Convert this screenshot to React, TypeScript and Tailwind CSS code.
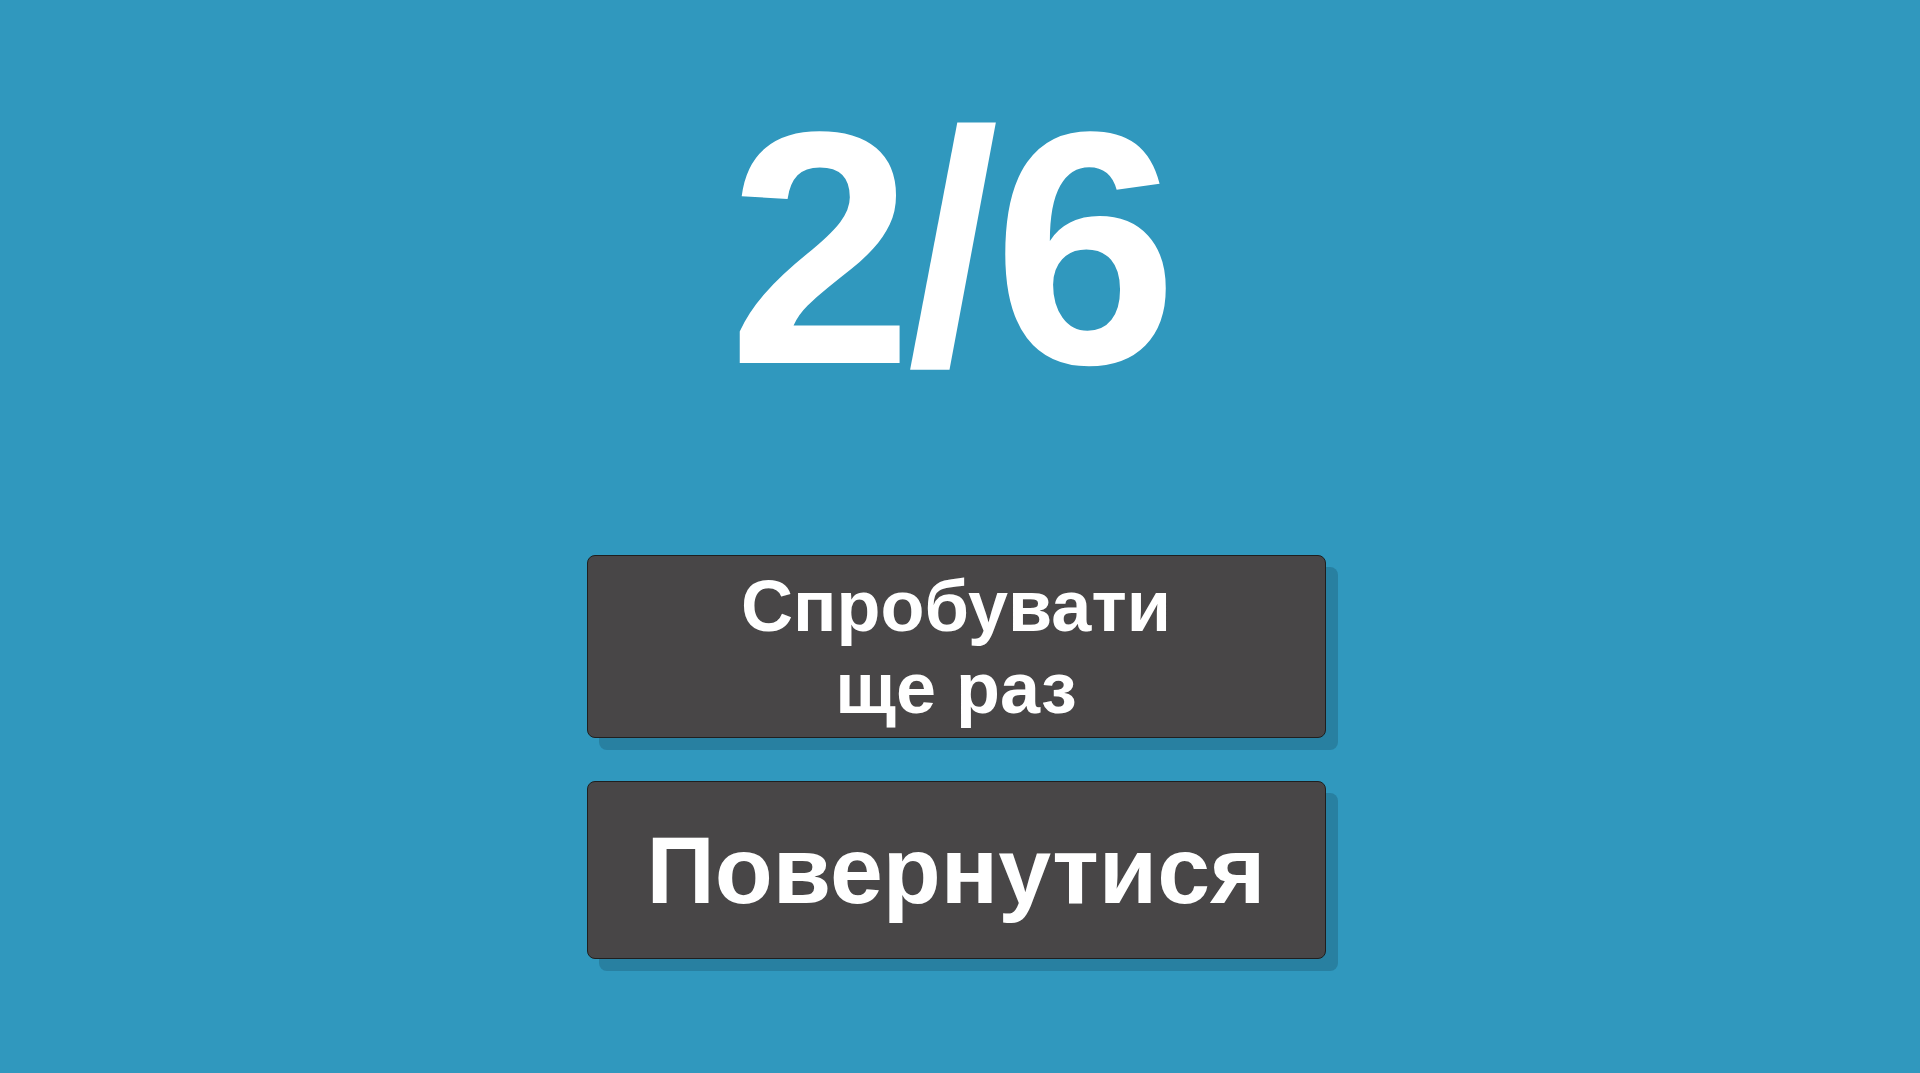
export default function App() {
  return (
    <div
      className="w-full h-[1073px] bg-[#3098be] flex flex-col items-center overflow-hidden"
      style={{ fontFamily: '"Liberation Sans", Arial, sans-serif' }}
    >
      <div className="mt-[82px] h-[333px] text-white font-bold text-[332px] leading-none tracking-[-6px] mr-[20px]">
        2/6
      </div>
      <div className="mt-[140px] flex flex-col gap-[43px] mr-[8px]">
        <button className="w-[739px] h-[183px] rounded-[8px] bg-[#484647] border border-[#1f1f1f] shadow-[12px_12px_0_#2880a1] text-white font-bold text-[72px] leading-[82px] flex items-center justify-center">
          <span className="block">
            Спробувати
            <br />
            ще раз
          </span>
        </button>
        <button className="w-[739px] h-[178px] rounded-[8px] bg-[#484647] border border-[#1f1f1f] shadow-[12px_12px_0_#2880a1] text-white font-bold text-[95px] leading-none flex items-center justify-center">
          Повернутися
        </button>
      </div>
    </div>
  );
}
